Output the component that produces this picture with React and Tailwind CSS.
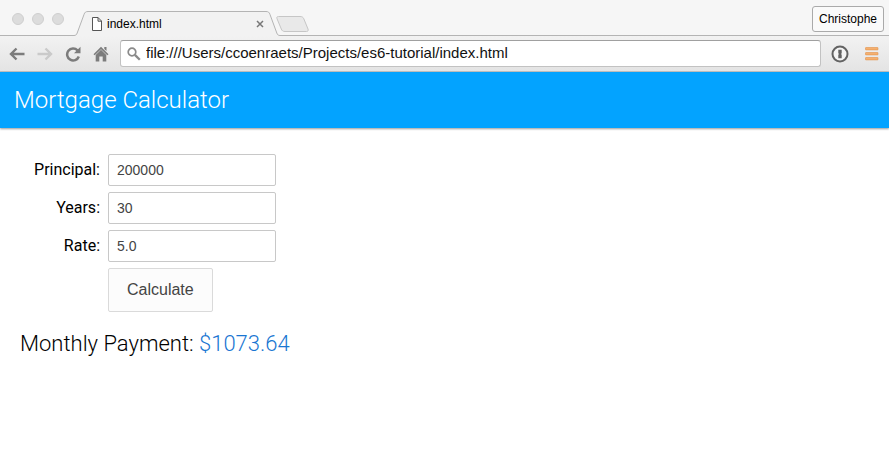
import { useState } from "react";

const fields = [
  { id: "principal", label: "Principal:", initial: "200000" },
  { id: "years", label: "Years:", initial: "30" },
  { id: "rate", label: "Rate:", initial: "5.0" },
];

function TabStrip() {
  return (
    <div className="flex h-9 items-stretch bg-[#f6f6f6]">
      <div className="flex w-[74px] items-center gap-2 border-b border-[#b4b4b4] pl-3 pt-0.5">
        <span className="size-3 rounded-full border border-[#cfcfcf] bg-[#dcdcdc]" />
        <span className="size-3 rounded-full border border-[#cfcfcf] bg-[#dcdcdc]" />
        <span className="size-3 rounded-full border border-[#cfcfcf] bg-[#dcdcdc]" />
      </div>
      <div className="flex w-[206px] items-end">
        <svg width="14" height="25" viewBox="0 0 14 25" className="shrink-0" aria-hidden="true">
          <path d="M0 24.5C2 24.5 2.6 23.5 3.2 22L10 3.5C10.8 1.3 11.6 .5 14 .5V25H0Z" fill="#f2f2f2" />
          <path d="M0 24.5C2 24.5 2.6 23.5 3.2 22L10 3.5C10.8 1.3 11.6 .5 14 .5" fill="none" stroke="#b4b4b4" />
        </svg>
        <div className="flex h-[25px] flex-1 items-center border-t border-[#b4b4b4] bg-[#f2f2f2] pl-1">
          <svg width="10" height="14" viewBox="0 0 10 14" aria-hidden="true">
            <path d="M.5 .5H6L9.5 4V13.5H.5ZM6 .5V4.2H9.5" fill="#fff" stroke="#555" />
          </svg>
          <span className="ml-[5px] flex-1 text-xs text-black">index.html</span>
          <button aria-label="Close tab" className="flex size-3 items-center justify-center">
            <svg width="8" height="8" viewBox="0 0 8 8" aria-hidden="true">
              <path d="M1 1L7 7M7 1L1 7" stroke="#777" strokeWidth="1.5" />
            </svg>
          </button>
        </div>
        <svg width="14" height="25" viewBox="0 0 14 25" className="shrink-0" aria-hidden="true">
          <path d="M14 24.5C12 24.5 11.4 23.5 10.8 22L4 3.5C3.2 1.3 2.4 .5 0 .5V25H14Z" fill="#f2f2f2" />
          <path d="M14 24.5C12 24.5 11.4 23.5 10.8 22L4 3.5C3.2 1.3 2.4 .5 0 .5" fill="none" stroke="#b4b4b4" />
        </svg>
      </div>
      <div className="flex flex-1 items-start justify-between border-b border-[#b4b4b4] pr-[5px]">
        <button aria-label="New tab" className="-ml-1 mt-4">
          <svg width="33" height="16" viewBox="0 0 33 16" className="block" aria-hidden="true">
            <path d="M2.5 .5H24C26 .5 27 1 27.8 2.8L32 13C32.6 14.6 32 15.5 30.5 15.5H9C7 15.5 6 14.8 5.3 13L1 2.7C.4 1.2 1 .5 2.5 .5Z" fill="#e9e9e9" stroke="#c6c6c6" />
          </svg>
        </button>
        <button className="mt-[6px] h-[26px] rounded-[3px] border border-[#aaa] bg-[#fafafa] px-[6px] text-xs text-black">
          Christophe
        </button>
      </div>
    </div>
  );
}

function Toolbar() {
  return (
    <div className="flex h-9 items-center border-b border-[#c2c2c2] bg-linear-to-b from-[#f2f2f2] to-[#e4e4e4] pl-[9px] pr-[10px]">
      <button aria-label="Back">
        <svg width="16" height="14" viewBox="0 0 16 14" className="block" aria-hidden="true">
          <path d="M7.5 1.5L2 7L7.5 12.5M2 7H15.5" fill="none" stroke="#7c7c7c" strokeWidth="2.4" />
        </svg>
      </button>
      <button aria-label="Forward" className="ml-3">
        <svg width="16" height="14" viewBox="0 0 16 14" className="block" aria-hidden="true">
          <path d="M8.5 1.5L14 7L8.5 12.5M14 7H.5" fill="none" stroke="#cacaca" strokeWidth="2.4" />
        </svg>
      </button>
      <button aria-label="Reload" className="ml-3">
        <svg width="16" height="16" viewBox="0 0 16 16" className="block" aria-hidden="true">
          <path d="M12.5 4.3A6 6 0 1 0 13.8 10.5" fill="none" stroke="#7c7c7c" strokeWidth="2.5" />
          <path d="M15.5 .8V7.3H9Z" fill="#7c7c7c" />
        </svg>
      </button>
      <button aria-label="Home" className="ml-3">
        <svg width="16" height="16" viewBox="0 0 16 16" className="block" aria-hidden="true">
          <path d="M8 .8L15.5 8.3L14.3 9.2L8 3.2L1.7 9.2L.5 8.3ZM11.3 1H13.5V5L11.3 3Z" fill="#7c7c7c" />
          <path d="M8 3.8L13.3 9V15.5H9.7V10.5H6.3V15.5H2.7V9Z" fill="#7c7c7c" />
        </svg>
      </button>
      <div className="ml-[11px] flex h-[27px] flex-1 items-center rounded-[3px] border border-[#c2c2c2] border-t-[#a0a0a0] bg-white pl-[6px]">
        <svg width="14" height="14" viewBox="0 0 14 14" className="shrink-0" aria-hidden="true">
          <circle cx="5" cy="5" r="3.8" fill="none" stroke="#8a8a8a" strokeWidth="1.7" />
          <path d="M7.9 7.9L12.8 12.8" stroke="#8a8a8a" strokeWidth="2.3" />
        </svg>
        <input
          aria-label="Address"
          defaultValue="file:///Users/ccoenraets/Projects/es6-tutorial/index.html"
          className="ml-[5px] min-w-0 flex-1 bg-transparent text-[15px] text-[#111] outline-none"
        />
      </div>
      <button aria-label="Password manager" className="ml-[10px]">
        <svg width="18" height="18" viewBox="0 0 18 18" className="block" aria-hidden="true">
          <circle cx="9" cy="9" r="7.5" fill="#f5f5f5" stroke="#636363" strokeWidth="2" />
          <path d="M7.3 4.8H10.7V8.2L10 9L10.7 9.8V13.2H7.3V9.8L8 9L7.3 8.2Z" fill="#636363" />
        </svg>
      </button>
      <button aria-label="Menu" className="ml-4">
        <svg width="14" height="14" viewBox="0 0 14 14" className="block" aria-hidden="true">
          <g fill="#f5b070" stroke="#e2924a" strokeWidth=".6">
            <rect x=".5" y=".5" width="12.5" height="2.4" rx=".4" />
            <rect x=".5" y="5.5" width="12.5" height="2.4" rx=".4" />
            <rect x=".5" y="10.5" width="12.5" height="2.4" rx=".4" />
          </g>
        </svg>
      </button>
    </div>
  );
}

export default function App() {
  const [values, setValues] = useState(fields.map((field) => field.initial));
  const [payment, setPayment] = useState("1073.64");

  const calculate = (event) => {
    event.preventDefault();
    const [principal, years, rate] = values.map(Number);
    const monthly = rate / 100 / 12;
    const months = years * 12;
    const result = monthly
      ? (principal * monthly) / (1 - Math.pow(1 + monthly, -months))
      : principal / months;
    setPayment(result.toFixed(2));
  };

  return (
    <div className="min-h-screen bg-white font-['Liberation_Sans',Arial,sans-serif]">
      <TabStrip />
      <Toolbar />
      <header className="flex h-14 items-center bg-[#03a3ff] px-[14px] shadow-[0_1px_2px_rgba(0,0,0,0.4)]">
        <h1 className="font-['Roboto',sans-serif] text-2xl font-light text-white">Mortgage Calculator</h1>
      </header>
      <main className="px-5 pt-[26px]">
        <form onSubmit={calculate} className="flex flex-col gap-[6px]">
          {fields.map((field, index) => (
            <div key={field.id} className="flex items-center gap-2">
              <label htmlFor={field.id} className="w-20 text-right font-['Roboto',sans-serif] text-base text-black">
                {field.label}
              </label>
              <input
                id={field.id}
                value={values[index]}
                onChange={(event) =>
                  setValues(values.map((value, i) => (i === index ? event.target.value : value)))
                }
                className="h-8 w-[168px] rounded-xs border border-[#c8c8c8] bg-white px-2 text-sm text-[#444]"
              />
            </div>
          ))}
          <button
            type="submit"
            className="ml-[88px] h-11 self-start rounded-xs border border-[#dadada] bg-[#fcfcfc] px-[18px] text-base text-[#444]"
          >
            Calculate
          </button>
        </form>
        <h2 className="mt-4 font-['Roboto',sans-serif] text-[22px] leading-8 font-light text-black">
          Monthly Payment: <span className="text-[#1976d2]">${payment}</span>
        </h2>
      </main>
    </div>
  );
}
